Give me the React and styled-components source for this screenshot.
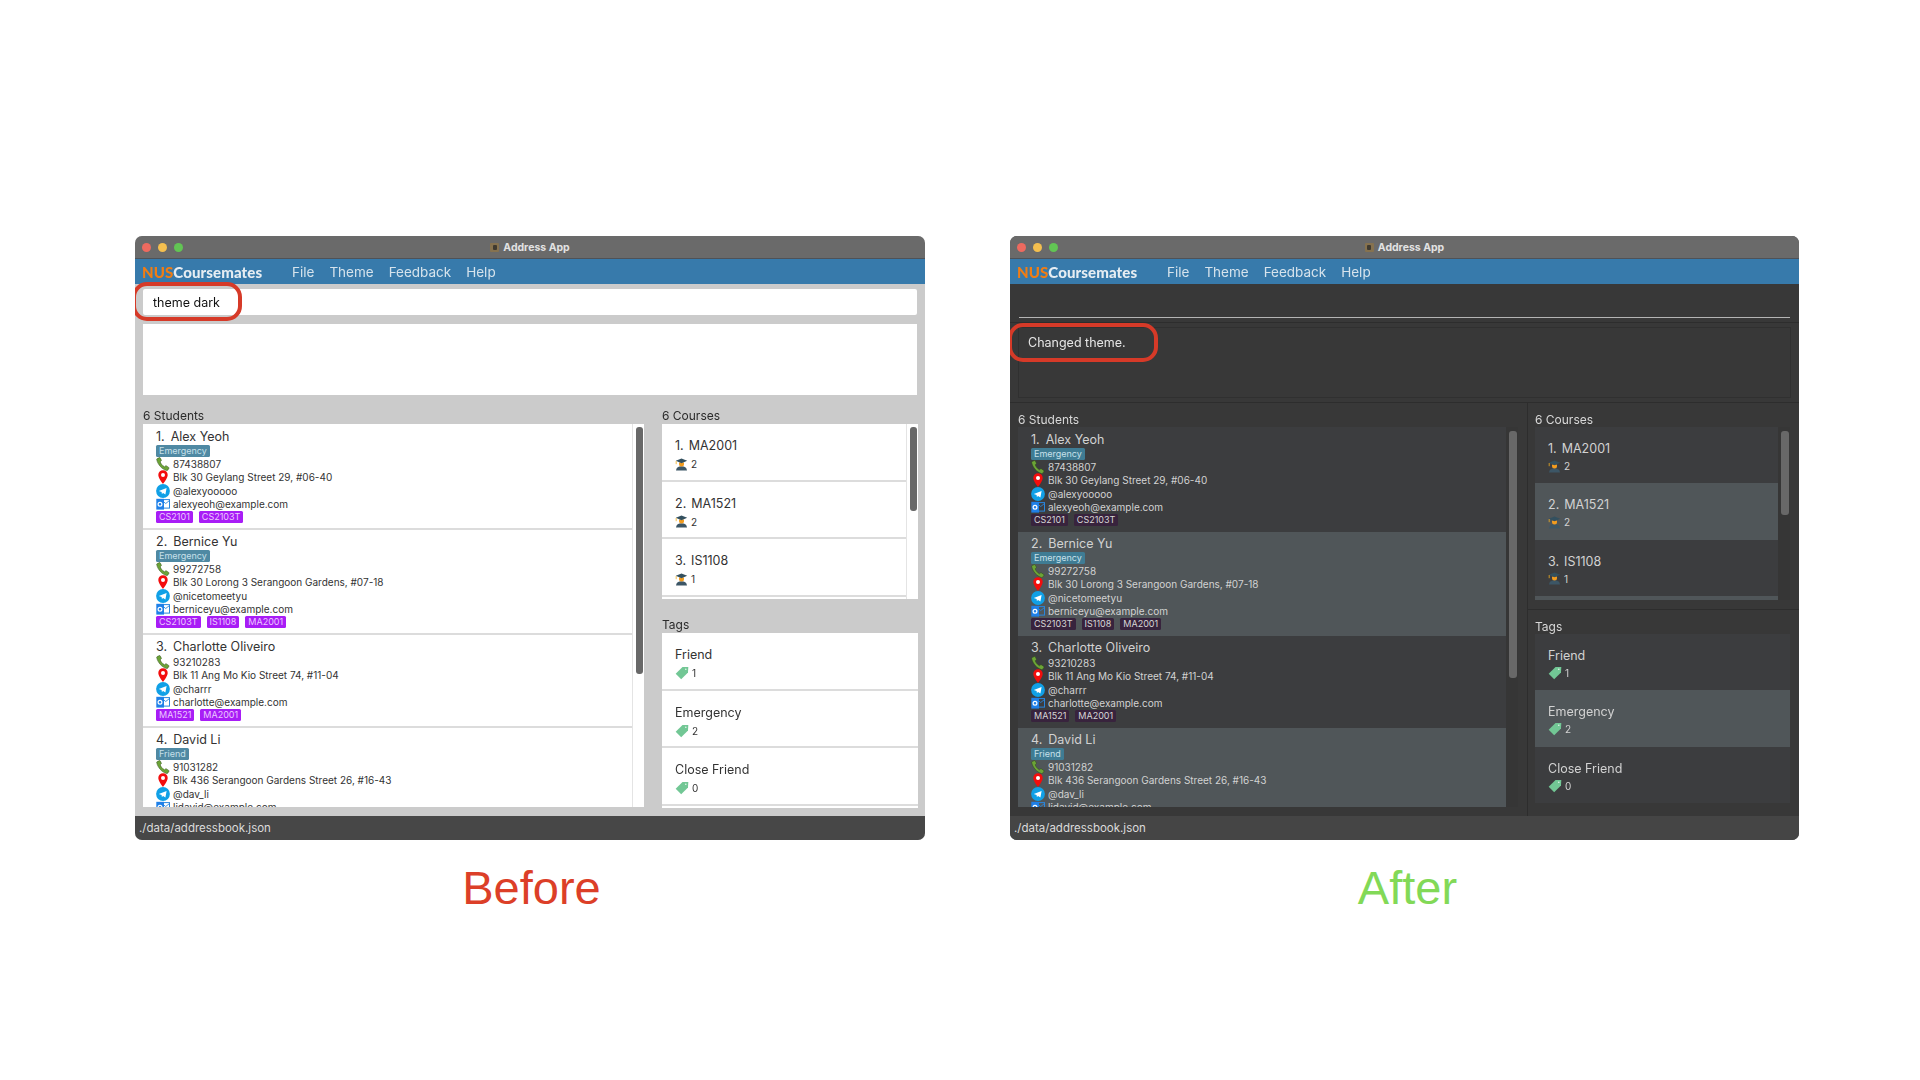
import React from 'react';
import styled, { createGlobalStyle, ThemeProvider } from 'styled-components';

const GlobalStyle = createGlobalStyle`
  html, body {
    margin: 0;
    background: #fff;
  }
  body {
    font-family: Inter, "Liberation Sans", sans-serif;
    overflow: hidden;
  }
`;

const light = {
  windowWidth: 790,
  body: '#cbcbcb',
  text: '#333',
  cellOdd: '#fff',
  cellEven: '#fff',
  cellBorder: '2px solid #dcdcdc',
  cellPadBottom: 5,
  track: '#fff',
  thumb: '#686868',
  label: '#2b2b2b',
  status: '#474747',
  pill: '#a81df6',
  pillText: '#ecc9ff',
  tag: '#4f89a3',
  tagText: '#c7e0ea',
  paneBorder: 'transparent',
  studentsPad: '13px 8px 9px 8px',
  studentsList: { width: 501, height: 383 },
  labelHeight: 16,
  sidePad: '13px 8px 8px 9px',
  tagsPad: '9px 8px 9px 9px',
  coursesList: { width: 256, height: 175 },
  tagsList: { width: 256, height: 175 },
  sideCell: 57.5,
  sideGap: 3,
  thumbOffset: 3,
};

const dark = {
  windowWidth: 789,
  body: '#383838',
  text: '#d2d2d2',
  cellOdd: '#3c3d3f',
  cellEven: '#505659',
  cellBorder: 'none',
  cellPadBottom: 6,
  track: '#363636',
  thumb: '#686868',
  label: '#d8d8d8',
  status: '#454545',
  pill: '#38233d',
  pillText: '#d6d6d6',
  tag: '#3f7c94',
  tagText: '#c7e0ea',
  paneBorder: '#2d2d2d',
  studentsPad: '9px 9px 9px 8px',
  studentsList: { width: 500, height: 380 },
  labelHeight: 15,
  sidePad: '9px 9px 9px 7px',
  tagsPad: '9px 9px 13px 7px',
  coursesList: { width: 255, height: 173 },
  tagsList: { width: 255, height: 169 },
  sideCell: 56.3,
  sideGap: 2,
  thumbOffset: 4,
};

const Page = styled.div`
  width: 1920px;
  height: 1080px;
  padding: 236px 0 0 135px;
  box-sizing: border-box;
`;

const Windows = styled.div`
  display: flex;
  gap: 85px;
`;

const Captions = styled.div`
  display: flex;
  gap: 85px;
  margin-top: 21px;
`;

const Caption = styled.div`
  width: ${({ $width }) => $width}px;
  padding-left: ${({ $shift }) => $shift}px;
  box-sizing: border-box;
  text-align: center;
  font-family: "Liberation Sans", Arial, sans-serif;
  font-size: 47px;
  line-height: 54px;
  color: ${({ $color }) => $color};
`;

const Window = styled.div`
  position: relative;
  width: ${({ theme }) => theme.windowWidth}px;
  height: 604px;
  display: flex;
  flex-direction: column;
  background: ${({ theme }) => theme.body};
  border-radius: 7px;
  overflow: hidden;
  filter: blur(0.35px);
`;

const TitleBar = styled.div`
  position: relative;
  height: 23px;
  flex: none;
  display: flex;
  align-items: center;
  justify-content: center;
  gap: 4px;
  background: #6a6a6a;
  border-bottom: 1px solid #4e5258;
  box-sizing: border-box;
  font-size: 10.5px;
  font-weight: 700;
  color: #e2e2e2;
`;

const Lights = styled.div`
  position: absolute;
  left: 7px;
  top: 7px;
  display: flex;
  gap: 7px;
`;

const Light = styled.span`
  width: 9px;
  height: 9px;
  border-radius: 50%;
  background: ${({ $color }) => $color};
`;

const AppIcon = styled.span`
  width: 9px;
  height: 9px;
  background: #86724f;
  border-radius: 1px;
  display: flex;
  align-items: center;
  justify-content: center;
  &::after {
    content: '';
    width: 4px;
    height: 5px;
    background: #3f3a30;
    border-radius: 1px;
  }
`;

const MenuBar = styled.div`
  height: 25px;
  flex: none;
  display: flex;
  align-items: center;
  padding-left: 7px;
  background: #377aab;
  font-size: 13.5px;
  color: #d6e3ec;
`;

const Logo = styled.div`
  width: 150px;
  font-family: Lato, "Open Sans", sans-serif;
  font-weight: 900;
  font-size: 15px;
  letter-spacing: 0.1px;
  color: #e6edf2;
  span {
    color: #f07d14;
  }
`;

const MenuItem = styled.span`
  margin-right: ${({ $gap }) => $gap}px;
`;

const CommandLight = styled.div`
  height: 40px;
  flex: none;
  padding: 5px 8px 9px;
  box-sizing: border-box;
`;

const CommandInput = styled.div`
  height: 26px;
  background: #fff;
  border-radius: 2px;
  padding-left: 10px;
  display: flex;
  align-items: center;
  font-size: 12.5px;
  color: #111;
`;

const ResultLight = styled.div`
  height: 71px;
  flex: none;
  margin: 0 8px;
  background: #fff;
`;

const CommandDark = styled.div`
  height: 39px;
  flex: none;
  padding: 33px 9px 0;
  box-sizing: border-box;
  border-bottom: 1px solid #2d2d2d;
`;

const CommandLine = styled.div`
  height: 1px;
  background: #b4b4b4;
`;

const ResultDark = styled.div`
  height: 80px;
  flex: none;
  box-sizing: border-box;
  padding: 4px 8px 4px;
  border-bottom: 1px solid #2d2d2d;
`;

const ResultBox = styled.div`
  height: 71px;
  box-sizing: border-box;
  border: 1px solid #303030;
  padding: 6px 9px;
  font-size: 12.5px;
  line-height: 17px;
  color: #e6e6e6;
`;

const MainRow = styled.div`
  flex: 1;
  min-height: 0;
  display: flex;
`;

const StudentsPane = styled.div`
  padding: ${({ theme }) => theme.studentsPad};
  border-right: 1px solid ${({ theme }) => theme.paneBorder};
`;

const SidePane = styled.div`
  flex: 1;
  display: flex;
  flex-direction: column;
`;

const CoursesPane = styled.div`
  padding: ${({ theme }) => theme.sidePad};
  border-bottom: 1px solid ${({ theme }) => theme.paneBorder};
`;

const TagsPane = styled.div`
  padding: ${({ theme }) => theme.tagsPad};
`;

const PaneLabel = styled.div`
  height: ${({ theme }) => theme.labelHeight}px;
  font-size: 12px;
  line-height: 15px;
  color: ${({ theme }) => theme.label};
`;

const ListFrame = styled.div`
  width: ${({ $size }) => $size.width}px;
  height: ${({ $size }) => $size.height}px;
  display: flex;
  overflow: hidden;
  background: ${({ theme }) => theme.cellOdd};
`;

const Cells = styled.div`
  flex: 1;
  min-width: 0;
`;

const Track = styled.div`
  width: ${({ $width }) => $width}px;
  flex: none;
  box-sizing: border-box;
  padding: ${({ theme }) => theme.thumbOffset}px 1px 0 3px;
  background: ${({ theme }) => theme.track};
  border-left: ${({ theme }) => (theme.cellBorder === 'none' ? 'none' : '1px solid #e4e4e4')};
`;

const Thumb = styled.div`
  height: ${({ $height }) => $height}px;
  background: ${({ theme }) => theme.thumb};
  border-radius: 3px;
`;

const StudentCell = styled.div`
  padding: 4px 0 ${({ theme }) => theme.cellPadBottom}px 13px;
  background: ${({ theme, $even }) => ($even ? theme.cellEven : theme.cellOdd)};
  border-bottom: ${({ theme }) => theme.cellBorder};
  color: ${({ theme }) => theme.text};
  &:first-child {
    padding-top: 5px;
  }
`;

const NameLine = styled.div`
  height: 16px;
  display: flex;
  gap: 6px;
  font-size: 12.5px;
  line-height: 16px;
  white-space: nowrap;
`;

const Badges = styled.div`
  height: 12px;
  display: flex;
  gap: 6px;
`;

const Badge = styled.span`
  height: 12px;
  padding: 0 3px;
  border-radius: 1.5px;
  font-size: 9px;
  line-height: 12px;
  background: ${({ theme, $kind }) => ($kind === 'course' ? theme.pill : theme.tag)};
  color: ${({ theme, $kind }) => ($kind === 'course' ? theme.pillText : theme.tagText)};
`;

const InfoLine = styled.div`
  height: 13.5px;
  display: flex;
  align-items: center;
  gap: 3px;
  font-size: 10px;
  white-space: nowrap;
`;

const IconSlot = styled.span`
  width: 14px;
  height: 14px;
  flex: none;
  display: flex;
  align-items: center;
  justify-content: center;
`;

const SideCell = styled.div`
  height: ${({ theme }) => theme.sideCell}px;
  box-sizing: border-box;
  padding: 14px 0 0 13px;
  background: ${({ theme, $even }) => ($even ? theme.cellEven : theme.cellOdd)};
  border-bottom: ${({ theme }) => theme.cellBorder};
  color: ${({ theme }) => theme.text};
`;

const SideTitle = styled.div`
  height: 16px;
  display: flex;
  gap: 5px;
  font-size: 12.5px;
  line-height: 16px;
  margin-bottom: ${({ theme }) => theme.sideGap}px;
`;

const CountLine = styled.div`
  height: 14px;
  display: flex;
  align-items: center;
  gap: 3px;
  font-size: 10px;
`;

const StatusBar = styled.div`
  height: 24px;
  flex: none;
  box-sizing: border-box;
  padding-left: 4px;
  display: flex;
  align-items: center;
  background: ${({ theme }) => theme.status};
  font-size: 11.5px;
  color: #dcdcdc;
`;

// hand-drawn red marker around the command / result text
const Callout = styled.div`
  position: absolute;
  left: ${({ $x }) => $x}px;
  top: ${({ $y }) => $y}px;
  width: ${({ $w }) => $w}px;
  height: ${({ $h }) => $h}px;
  box-sizing: border-box;
  border: 4px solid #d63a28;
  border-radius: 15px;
`;

const CalloutLayer = styled.div`
  position: absolute;
  left: 0;
  top: 0;
`;

const PhoneIcon = () => (
  <svg width="14" height="14" viewBox="0 0 14 14">
    <path
      d="M1.2 1.6 3.4.6c.4-.1.7 0 .9.4l1 2c.2.4.1.7-.2 1L4.2 4.800c.5 1.700 2.200 3.900 4.300 5l1-.9c.3-.3.6-.3 1 0l2.200 1.500c.4.300.4.600.2 1l-1.200 1.800c-.3.400-.7.500-1.200.400C5.800 12.100 1.700 7.500.7 2.600c-.1-.5.100-.8.500-1z"
      fill="#6ca437"
      stroke="#2f4a1a"
      strokeWidth="0.5"
    />
  </svg>
);

const PinIcon = () => (
  <svg width="14" height="14" viewBox="0 0 14 14">
    <path d="M7 .2a4.700 4.700 0 0 0-4.700 4.700C2.300 8.300 7 13.800 7 13.800s4.700-5.500 4.700-8.900A4.700 4.700 0 0 0 7 .2z" fill="#f30d0d" />
    <circle cx="7" cy="4.900" r="2" fill="#fff" />
  </svg>
);

const TelegramIcon = () => (
  <svg width="14" height="14" viewBox="0 0 14 14">
    <circle cx="7" cy="7" r="6.900" fill="#11a0e6" />
    <path d="M2.800 7.100 10.600 3.900 9.400 10.400 7.100 8.900 5.900 10 5.600 8.100z" fill="#fff" />
  </svg>
);

const OutlookIcon = () => (
  <svg width="14" height="14" viewBox="0 0 14 14">
    <rect x="6" y="2.600" width="7.500" height="8.500" fill="none" stroke="#2a86dc" strokeWidth="1" />
    <path d="M6 3.500 9.700 6.500 13.500 3.500" fill="none" stroke="#2a86dc" strokeWidth="0.9" />
    <rect x="0.300" y="1.800" width="7.700" height="10.800" fill="#1f80e8" />
    <circle cx="4" cy="7.200" r="1.900" fill="none" stroke="#fff" strokeWidth="1.200" />
  </svg>
);

const GradIcon = () => (
  <svg width="13" height="13" viewBox="0 0 13 13">
    <path d="M1 12.500c.3-3 2.400-4.200 5.500-4.200s5.200 1.200 5.500 4.200z" fill="#3c5666" />
    <path d="M4 4.500h5v1.500a2.500 2.500 0 0 1-5 0z" fill="#f29c1f" />
    <path d="M.8 2.800 6.500.4l5.700 2.400L6.500 5.200z" fill="#33505f" />
    <path d="M1.200 3v3.200" stroke="#f2b01f" strokeWidth="0.8" />
  </svg>
);

const TagIcon = () => (
  <svg width="14" height="14" viewBox="0 0 14 14">
    <path d="M13.300.9 13 6.500 6.200 13.300.7 7.800 7.500 1z" fill="#72c795" />
    <circle cx="10.800" cy="3.300" r="0.800" fill="#eaf6ee" />
  </svg>
);

const students = [
  {
    name: 'Alex Yeoh',
    tags: ['Emergency'],
    phone: '87438807',
    address: 'Blk 30 Geylang Street 29, #06-40',
    telegram: '@alexyooooo',
    email: 'alexyeoh@example.com',
    courses: ['CS2101', 'CS2103T'],
  },
  {
    name: 'Bernice Yu',
    tags: ['Emergency'],
    phone: '99272758',
    address: 'Blk 30 Lorong 3 Serangoon Gardens, #07-18',
    telegram: '@nicetomeetyu',
    email: 'berniceyu@example.com',
    courses: ['CS2103T', 'IS1108', 'MA2001'],
  },
  {
    name: 'Charlotte Oliveiro',
    tags: [],
    phone: '93210283',
    address: 'Blk 11 Ang Mo Kio Street 74, #11-04',
    telegram: '@charrr',
    email: 'charlotte@example.com',
    courses: ['MA1521', 'MA2001'],
  },
  {
    name: 'David Li',
    tags: ['Friend'],
    phone: '91031282',
    address: 'Blk 436 Serangoon Gardens Street 26, #16-43',
    telegram: '@dav_li',
    email: 'lidavid@example.com',
    courses: ['CS2101'],
  },
];

const courses = [
  { code: 'MA2001', count: 2 },
  { code: 'MA1521', count: 2 },
  { code: 'IS1108', count: 1 },
  { code: 'CS2101', count: 1 },
];

const tags = [
  { name: 'Friend', count: 1 },
  { name: 'Emergency', count: 2 },
  { name: 'Close Friend', count: 0 },
];

const Student = ({ student, index }) => (
  <StudentCell $even={index % 2 === 1}>
    <NameLine>
      <span>{index + 1}.</span>
      <span>{student.name}</span>
    </NameLine>
    {student.tags.length > 0 && (
      <Badges>
        {student.tags.map((t) => (
          <Badge key={t}>{t}</Badge>
        ))}
      </Badges>
    )}
    <InfoLine>
      <IconSlot><PhoneIcon /></IconSlot>
      {student.phone}
    </InfoLine>
    <InfoLine>
      <IconSlot><PinIcon /></IconSlot>
      {student.address}
    </InfoLine>
    <InfoLine>
      <IconSlot><TelegramIcon /></IconSlot>
      {student.telegram}
    </InfoLine>
    <InfoLine>
      <IconSlot><OutlookIcon /></IconSlot>
      {student.email}
    </InfoLine>
    <Badges>
      {student.courses.map((c) => (
        <Badge key={c} $kind="course">{c}</Badge>
      ))}
    </Badges>
  </StudentCell>
);

const Lists = ({ theme }) => (
  <MainRow>
    <StudentsPane>
      <PaneLabel>6 Students</PaneLabel>
      <ListFrame $size={theme.studentsList}>
        <Cells>
          {students.map((s, i) => (
            <Student key={s.name} student={s} index={i} />
          ))}
        </Cells>
        <Track $width={12}>
          <Thumb $height={247} />
        </Track>
      </ListFrame>
    </StudentsPane>
    <SidePane>
      <CoursesPane>
        <PaneLabel>6 Courses</PaneLabel>
        <ListFrame $size={theme.coursesList}>
          <Cells>
            {courses.map((c, i) => (
              <SideCell key={c.code} $even={i % 2 === 1}>
                <SideTitle>
                  <span>{i + 1}.</span>
                  <span>{c.code}</span>
                </SideTitle>
                <CountLine>
                  <GradIcon />
                  {c.count}
                </CountLine>
              </SideCell>
            ))}
          </Cells>
          <Track $width={12}>
            <Thumb $height={84} />
          </Track>
        </ListFrame>
      </CoursesPane>
      <TagsPane>
        <PaneLabel>Tags</PaneLabel>
        <ListFrame $size={theme.tagsList}>
          <Cells>
            {tags.map((t, i) => (
              <SideCell key={t.name} $even={i % 2 === 1}>
                <SideTitle>{t.name}</SideTitle>
                <CountLine>
                  <TagIcon />
                  {t.count}
                </CountLine>
              </SideCell>
            ))}
          </Cells>
        </ListFrame>
      </TagsPane>
    </SidePane>
  </MainRow>
);

const Chrome = ({ children }) => (
  <>
    <TitleBar>
      <Lights>
        <Light $color="#ee6a5f" />
        <Light $color="#f4bf4f" />
        <Light $color="#62c554" />
      </Lights>
      <AppIcon />
      Address App
    </TitleBar>
    <MenuBar>
      <Logo><span>NUS</span>Coursemates</Logo>
      <MenuItem $gap={15}>File</MenuItem>
      <MenuItem $gap={15}>Theme</MenuItem>
      <MenuItem $gap={15}>Feedback</MenuItem>
      <MenuItem $gap={0}>Help</MenuItem>
    </MenuBar>
    {children}
    <StatusBar>./data/addressbook.json</StatusBar>
  </>
);

const BeforeWindow = () => (
  <ThemeProvider theme={light}>
    <Window>
      <Chrome>
        <CommandLight>
          <CommandInput>theme dark</CommandInput>
        </CommandLight>
        <ResultLight />
        <Lists theme={light} />
      </Chrome>
      <CalloutLayer>
        <Callout $x={-3} $y={46} $w={110} $h={39} />
      </CalloutLayer>
    </Window>
  </ThemeProvider>
);

const AfterWindow = () => (
  <ThemeProvider theme={dark}>
    <Window>
      <Chrome>
        <CommandDark>
          <CommandLine />
        </CommandDark>
        <ResultDark>
          <ResultBox>Changed theme.</ResultBox>
        </ResultDark>
        <Lists theme={dark} />
      </Chrome>
      <CalloutLayer>
        <Callout $x={-2} $y={87} $w={150} $h={39} />
      </CalloutLayer>
    </Window>
  </ThemeProvider>
);

export default function App() {
  return (
    <Page>
      <GlobalStyle />
      <Windows>
        <BeforeWindow />
        <AfterWindow />
      </Windows>
      <Captions>
        <Caption $width={790} $shift={3} $color="#dc3f28">Before</Caption>
        <Caption $width={789} $shift={6} $color="#82d957">After</Caption>
      </Captions>
    </Page>
  );
}
